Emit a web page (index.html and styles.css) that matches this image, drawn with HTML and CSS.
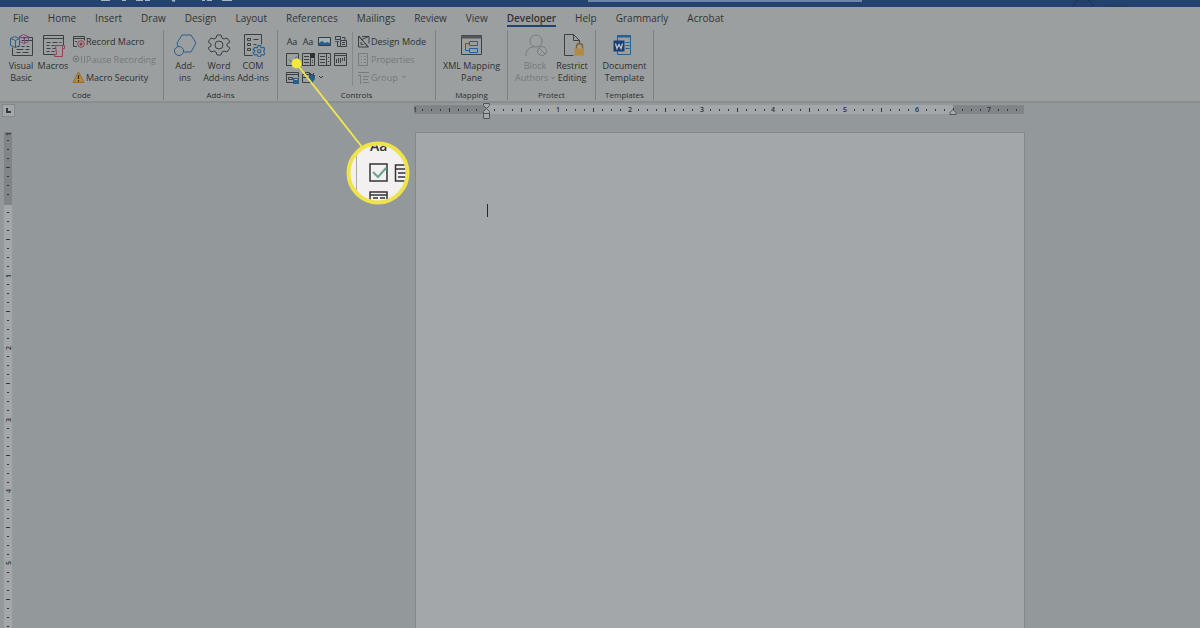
FILE: index.html
```html
<!DOCTYPE html>
<html lang="en">
<head>
<meta charset="utf-8">
<title>Document - Word</title>
<link rel="stylesheet" href="styles.css">
</head>
<body>
<header class="titlebar">
  <svg class="title-marks" viewBox="0 0 140 7" aria-hidden="true"><path d="M6 0h9M27 0h4M41 0h7M50 0h5M107 0h3M112 0h5M127 0h10" stroke="#a9b5c8" stroke-width="2"/><path d="M77 0l3 1" stroke="#a9b5c8" stroke-width="2"/></svg>
  <div class="search"></div>
  <svg class="avatar" viewBox="0 0 60 7" aria-hidden="true"><path d="M3 7a10 8 0 0 1 20 0" fill="#24406f" stroke="#1d365d"/><path d="M36 6h24" stroke="#203c67"/></svg>
</header>
<nav class="tabs">
  <a href="#">File</a><a href="#">Home</a><a href="#">Insert</a><a href="#">Draw</a><a href="#">Design</a><a href="#">Layout</a><a href="#">References</a><a href="#">Mailings</a><a href="#">Review</a><a href="#">View</a><a href="#" class="active">Developer</a><a href="#">Help</a><a href="#">Grammarly</a><a href="#">Acrobat</a>
</nav>
<section class="ribbon">
  <div class="group code">
    <div class="tools">
      <button class="big w30"><svg viewBox="-.5 -.5 24 24"><path d="M11 4h12v18H3v-8M12 7h11M7 13h3m2 0h3m2 0h3M7 16h7m2 0h4M7 19h4m2 0h6" class="k"/><path d="M1 5l4-2 5 2v7l-4 2-5-2zM1 5l5 2 4-2M6 7v7" class="b fillbg"/><path d="M10 3l4-2 5 2v5l-4 2-5-2zM10 3l5 2 4-2M15 5v5" class="p"/></svg>Visual<br>Basic</button>
      <button class="big w34"><svg viewBox="-.5 -.5 24 24"><path d="M13 21H2V2h20v10M2 5h20M5 9h4m2 0h5m2 0h2M5 12h3m2 0h3M5 15h4m2 0h3M5 18h3m2 0h3" class="k"/><path d="M14 12h9v3h-2v8h-8v-2h2zM21 15v-3" class="r fillbg"/></svg>Macros</button>
      <div class="stack">
        <button class="small"><svg viewBox="0 0 13 13"><path d="M5 11.500H1.500v-10h11v4M1.500 3.500h11M3 6.500h2" class="k"/><circle cx="9" cy="9" r="3.300" class="r fillbg"/><circle cx="9" cy="9" r="1.500" fill="#8e3443"/></svg>Record Macro</button>
        <button class="small" disabled><svg viewBox="0 0 13 13"><circle cx="4" cy="6" r="3" class="g"/><circle cx="4" cy="6" r="1.500" fill="#777b7c"/><path d="M9.500 3v7M12.500 3v7" class="g"/></svg>Pause Recording</button>
        <button class="small"><svg viewBox="0 0 13 13"><path d="M6.500 1L12 11.500H1z" fill="#b58b3c" stroke="#94702c"/><path d="M6.500 4v4M6.500 9v1.500" stroke="#332d20" stroke-width="1.200"/></svg>Macro Security</button>
      </div>
    </div>
    <h2>Code</h2>
  </div>
  <div class="group addins">
    <div class="tools">
      <button class="big w34"><svg viewBox="0 0 24 24"><path d="M5 13l-1-3 5-8h9l5 8-5 9h-7" class="b"/><circle cx="6" cy="18" r="4.500" class="b"/></svg>Add-<br>ins</button>
      <button class="big w34"><svg viewBox="0 0 24 24"><path d="M10 2h4l1 3 2 1 3-1 3 4-3 2v2l3 2-3 4-3-1-2 1-1 3h-4l-1-3-2-1-3 1-3-4 3-2v-2l-3-2 3-4 3 1 2-1z" class="k"/><circle cx="12" cy="12" r="4" class="k"/></svg>Word<br>Add-ins</button>
      <button class="big w34"><svg viewBox="-.5 -.5 24 24"><path d="M11 22H3V1h17v10" class="k"/><path d="M6 5h3v2H6zM6 10h3v2H6zM6 15h3v2H6zM12 6h5M12 11h3" class="k"/><g transform="translate(11 11) scale(.56)"><path d="M10 2h4l1 3 2 1 3-1 3 4-3 2v2l3 2-3 4-3-1-2 1-1 3h-4l-1-3-2-1-3 1-3-4 3-2v-2l-3-2 3-4 3 1 2-1z" fill="#9c9f9f" stroke="#285f91" stroke-width="2"/><circle cx="12" cy="12" r="3" fill="none" stroke="#285f91" stroke-width="2"/></g></svg>COM<br>Add-ins</button>
    </div>
    <h2>Add-ins</h2>
  </div>
  <div class="group controls">
    <div class="tools">
      <div class="grid">
        <button class="ic">Aa</button>
        <button class="ic">Aa</button>
        <button class="ic" aria-label="Picture"><svg viewBox="0 0 13 13"><path d="M.5 2.500h12v8H.5z" fill="#a5b0b6" stroke="#333c42"/><path d="M1 8l3-2 3 2 2-1 3 1v2H1z" fill="#285f91"/></svg></button>
        <button class="ic" aria-label="Building block"><svg viewBox="0 0 13 13"><path d="M1.500 1.500h5v3h-5zM3.500 6.500v5h3M6.500 5.500h6v6h-6zM8 7.500h3M8 9.500h3M8 2.500h3v3" class="k"/><path d="M1 6.500h4" class="b"/></svg></button>
        <button class="ic" aria-label="Check box"><svg viewBox="0 0 13 13"><path d="M.5.5h12v12H.5z" class="k"/><path d="M3 6.500l3 3 5-6" stroke="#37665a" fill="none"/></svg></button>
        <button class="ic" aria-label="Combo box"><svg viewBox="0 0 13 13"><path d="M.5.5h12v12H.5zM8.500 1v11M2 3.500h5M2 6.500h5M2 9.500h5M10 7.500h1M10 9.500h1" class="k"/><path d="M8 0h5v5H8z" fill="#2e3335"/></svg></button>
        <button class="ic" aria-label="Drop-down list"><svg viewBox="0 0 13 13"><path d="M.5.5h12v12H.5zM8.500 1v11M2 3.500h5M2 6.500h5M2 9.500h5M10 4.500h1M10 8.500h1" class="k"/></svg></button>
        <button class="ic" aria-label="Date picker"><svg viewBox="0 0 13 13"><path d="M.5.5h12v12H.5zM.5 2.500h12M2.500 6v4M4.500 5v5M6.500 5v5M8.500 5v3M10.500 4v4" class="k"/></svg></button>
        <button class="ic" aria-label="Repeating section"><svg viewBox="0 0 13 13"><path d="M7 11.500H.5v-10h12v5M.5 3.500h12M2.500 6.500h4v2h-4z" class="k"/><path d="M7 7h6v6H7z" fill="#285f91"/><path d="M8.500 8.500h3" stroke="#a9b3ba"/></svg></button>
        <button class="ic" aria-label="Legacy tools"><svg viewBox="0 0 13 13"><path d="M.5 3.500h10v8H.5zM3.500 3V1.500h4V3M1 6.500h6" class="k"/><path d="M7 4h6v4l-3 4-3-3z" fill="#285f91"/><path d="M8.500 2v3M11.500 2v3" class="k"/></svg></button>
        <button class="ic" aria-label="More legacy tools"><svg viewBox="0 0 13 13"><path d="M1 5l2 2 2-2" class="k"/></svg></button>
      </div>
      <div class="stack ruled">
        <button class="small"><svg viewBox="0 0 13 13"><path d="M1.500 1v11h10zM4 7v2.500h2.500M5 1.500h7v7M11.500 1.500L4 5" class="k"/><path d="M2 1l9 11" class="k"/></svg>Design Mode</button>
        <button class="small" disabled><svg viewBox="0 0 13 13"><path d="M1.500.5h9v12h-9zM4 3.500h1M4 6.500h1M4 9.500h1M7 3.500h2M7 6.500h2M7 9.500h2" class="g"/></svg>Properties</button>
        <button class="small" disabled><svg viewBox="0 0 13 13"><path d="M1 1.500h11M3.500 4v9M6 5.500h6M6 8.500h5M6 11.500h6M1 4.500h2" class="g"/></svg>Group<i class="caret"></i></button>
      </div>
    </div>
    <h2>Controls</h2>
  </div>
  <div class="group mapping">
    <div class="tools">
      <button class="big"><svg viewBox="-.5 -.5 24 24"><path d="M1 2h20v19H1z" class="k"/><path d="M1 2h20v3H1z" fill="#50575a"/><path d="M9 8h8v4H9zM9 15h8v4H9zM9 10H5v7h4" class="b"/></svg>XML Mapping<br>Pane</button>
    </div>
    <h2>Mapping</h2>
  </div>
  <div class="group protect">
    <div class="tools">
      <button class="big w40" disabled><svg viewBox="0 0 24 24"><circle cx="13" cy="8" r="6" class="g"/><path d="M3 23c0-6 3-9 8-9" class="g"/><circle cx="19" cy="18" r="4.500" class="g"/><path d="M16 15l6 6" class="g"/></svg>Block<br>Authors<i class="caret"></i></button>
      <button class="big w34"><svg viewBox="-.5 -.5 24 24"><path d="M13 22H4V1h9l6 6v4M13 1v6h6" class="k"/><path d="M16 15v-2a3 3 0 0 1 6 0v2" fill="none" stroke="#80642f" stroke-width="1.500"/><path d="M14 15h10v7H14z" fill="#b28b43"/></svg>Restrict<br>Editing</button>
    </div>
    <h2>Protect</h2>
  </div>
  <div class="group templates">
    <div class="tools">
      <button class="big"><svg viewBox="-.5 -.5 24 24"><path d="M5 2h13v19H5z" class="b"/><path d="M5 2h13v2H5z" fill="#285f91"/><path d="M13 9h4M13 12h4M13 15h4" class="b"/><path d="M1 7h11v11H1z" fill="#173f75"/><path d="M3 10l1.500 5 2-4 2 4L10 10" stroke="#bcc4ca" fill="none" stroke-width="1.300"/></svg>Document<br>Template</button>
    </div>
    <h2>Templates</h2>
  </div>
</section>
<main class="workspace">
  <aside class="left">
    <button class="tabstop" aria-label="Tab stop"><svg viewBox="0 0 11 11"><path d="M4 3v4h4" fill="none" stroke="#33383a" stroke-width="2"/></svg></button>
    <svg class="vruler" viewBox="0 0 8 496" aria-hidden="true">
      <defs><pattern id="vt" width="8" height="72" patternUnits="userSpaceOnUse"><path d="M3 8.500h2M3 17.500h2M3 26.500h2M2 35.500h4M3 44.500h2M3 53.500h2M3 62.500h2" stroke="#35393b"/></pattern></defs>
      <path d="M0 0h8v496H0z" fill="#a3a7a9"/><path d="M0 0h8v73H0z" fill="#818587"/><path d="M0 0h8v496H0z" fill="url(#vt)"/>
      <g class="num"><text transform="translate(7 2) rotate(-90)">1</text><text transform="translate(7 144) rotate(-90)">1</text><text transform="translate(7 216) rotate(-90)">2</text><text transform="translate(7 288) rotate(-90)">3</text><text transform="translate(7 359) rotate(-90)">4</text><text transform="translate(7 431) rotate(-90)">5</text></g>
    </svg>
  </aside>
  <div class="canvas">
    <svg class="hruler" viewBox="0 0 610 18" aria-hidden="true">
      <defs><pattern id="ht" width="72" height="9" patternUnits="userSpaceOnUse"><path d="M9.500 4v2M18.500 4v2M27.500 4v2M36.500 3v4M45.500 4v2M54.500 4v2M63.500 4v2" stroke="#35393b"/></pattern></defs>
      <path d="M0 2h610v9H0z" fill="#a3a7a9"/><path d="M0 2h72v9H0zM539 2h71v9h-71z" fill="#818587"/>
      <g transform="translate(-1 2)"><path d="M1 0h610v9H1z" fill="url(#ht)"/></g>
      <g class="num"><text x="1" y="9">1</text><text x="144" y="9">1</text><text x="216" y="9">2</text><text x="288" y="9">3</text><text x="359" y="9">4</text><text x="431" y="9">5</text><text x="503" y="9">6</text><text x="575" y="9">7</text></g>
      <path d="M69.500.5h6v2l-3 3-3-3zM69.500 10.500v-2l3-3 3 3v2zM69.500 10.500h6v5h-6zM536 11.500v-2l3-3 3 3v2z" fill="#a7abad" stroke="#505658"/>
    </svg>
    <article class="page"><span class="cursor"></span></article>
  </div>
</main>
<svg class="callout" viewBox="0 0 130 150" aria-hidden="true">
  <defs><clipPath id="lens"><circle cx="88" cy="118" r="28"/></clipPath></defs>
  <path d="M6 8l66 84" stroke="#ede551" stroke-width="2"/>
  <circle cx="6.500" cy="8.500" r="5" fill="#f3e83c"/>
  <circle cx="88" cy="118" r="29.500" fill="#f2f0f0"/>
  <g clip-path="url(#lens)" fill="none" stroke="#343434" stroke-width="1.500">
    <path d="M66.500 80v76" stroke="#aaa" stroke-width="1"/>
    <text x="80" y="96" class="lens-text">Aa</text><text x="105" y="96" class="lens-text">Aa</text>
    <path d="M80 109h17v17H80z"/><path d="M83 117l5 5 8-9" stroke="#69a38d" stroke-width="2"/>
    <path d="M105.500 110h16v16h-16zM105 114h16M108 118h8M108 122h8M80 137h17v14H80zM80 140h17M83 143h5M90 143h5"/>
  </g>
  <circle cx="88" cy="118" r="29.500" fill="none" stroke="#eee34c" stroke-width="4"/>
</svg>
</body>
</html>
```
FILE: styles.css
```css
* { box-sizing: border-box; }
body {
  margin: 0;
  min-height: 100vh;
  display: flex;
  flex-direction: column;
  position: relative;
  overflow: hidden;
  background: #93989a;
  color: #2c3032;
  font-family: "Open Sans", "Noto Sans", sans-serif;
  font-size: 9px;
}
button {
  font: inherit;
  color: inherit;
  background: none;
  border: 0;
  padding: 0;
  margin: 0;
}
button:disabled { color: #74797a; }
.k, .b, .r, .p, .g { fill: none; stroke: #3a4043; stroke-width: 1; }
.b { stroke: #285f91; }
.r { stroke: #98404f; }
.p { stroke: #83467f; }
.g { stroke: #777c7d; }
.fillbg { fill: #9c9f9f; }

.titlebar {
  height: 7px;
  display: flex;
  background: #24426f;
  padding: 0 70px 0 95px;
}
.title-marks { width: 140px; height: 7px; }
.search { width: 274px; height: 2px; background: #7185a4; margin-left: 353px; }
.avatar { width: 60px; height: 7px; margin-left: auto; }

.tabs {
  display: flex;
  gap: 19px;
  height: 23px;
  padding: 3px 13px 0;
  background: #9c9f9f;
  font-size: 10px;
  line-height: 17px;
}
.tabs a { color: #303436; text-decoration: none; height: 17px; }
.tabs .active { font-weight: 600; border-bottom: 2px solid #24426f; }

.ribbon {
  display: flex;
  height: 73px;
  background: #9c9f9f;
  border-bottom: 2px solid #898d8f;
}
.group {
  display: flex;
  flex-direction: column;
  justify-content: space-between;
  height: 70px;
  border-right: 1px solid #7c8081;
}
.group h2 {
  margin: 0;
  font-size: 8px;
  line-height: 11px;
  font-weight: 400;
  text-align: center;
}
.tools { display: flex; align-items: flex-start; padding-top: 2px; }
.code { width: 164px; }
.code .tools { padding-left: 6px; }
.addins { width: 114px; }
.addins .tools { padding-left: 4px; }
.controls { width: 158px; }
.controls .tools { padding-left: 6px; }
.mapping { width: 72px; }
.protect { width: 88px; }
.protect .tools { padding-left: 7px; }
.templates { width: 58px; }
.mapping .tools, .templates .tools { justify-content: center; }

.big {
  padding-top: 1px;
  text-align: center;
  line-height: 12px;
  white-space: nowrap;
}
.big svg { display: block; width: 24px; height: 24px; margin: 0 auto 3px; }
.w30 { width: 30px; }
.w34 { width: 34px; }
.w40 { width: 40px; }
.stack { display: flex; flex-direction: column; padding-left: 2px; }
.small { display: flex; align-items: center; gap: 1px; height: 18px; white-space: nowrap; }
.small svg { width: 13px; height: 13px; }
.ruled { border-left: 1px solid #858989; margin-left: 4px; padding-left: 4px; }
.grid { display: grid; grid-template-columns: repeat(4, 16px); grid-auto-rows: 18px; }
.ic { display: flex; align-items: center; justify-content: center; }
.ic svg { width: 13px; height: 13px; }
.caret {
  display: inline-block;
  width: 4px;
  height: 4px;
  margin: 0 1px 2px 3px;
  border: solid #74797a;
  border-width: 0 1px 1px 0;
  transform: rotate(45deg) scale(.7);
}

.workspace { flex: 1; display: flex; }
.left { width: 16px; padding: 1px 0 0 2px; }
.tabstop { display: block; width: 13px; height: 13px; background: #a3a7a9; border: 1px solid #85898b; }
.tabstop svg { display: block; width: 11px; height: 11px; }
.vruler { display: block; width: 8px; height: 496px; margin: 15px 0 0 2px; }
.num { font-size: 7px; font-weight: 600; text-anchor: middle; fill: #2c3032; }
.canvas {
  flex: 1;
  display: flex;
  flex-direction: column;
  align-items: flex-start;
  padding-left: 398px;
}
.hruler { width: 610px; height: 18px; }
.page {
  flex: 1;
  width: 610px;
  margin: 11px 0 0 1px;
  padding: 71px;
  background: #a3a7aa;
  border: solid #84888a;
  border-width: 1px 1px 0;
}
.cursor { display: block; width: 1px; height: 13px; background: #25292b; }

.callout { position: absolute; left: 290px; top: 55px; width: 130px; height: 150px; }
.lens-text { font-size: 14px; font-weight: 600; fill: #343434; stroke: none; }
```
